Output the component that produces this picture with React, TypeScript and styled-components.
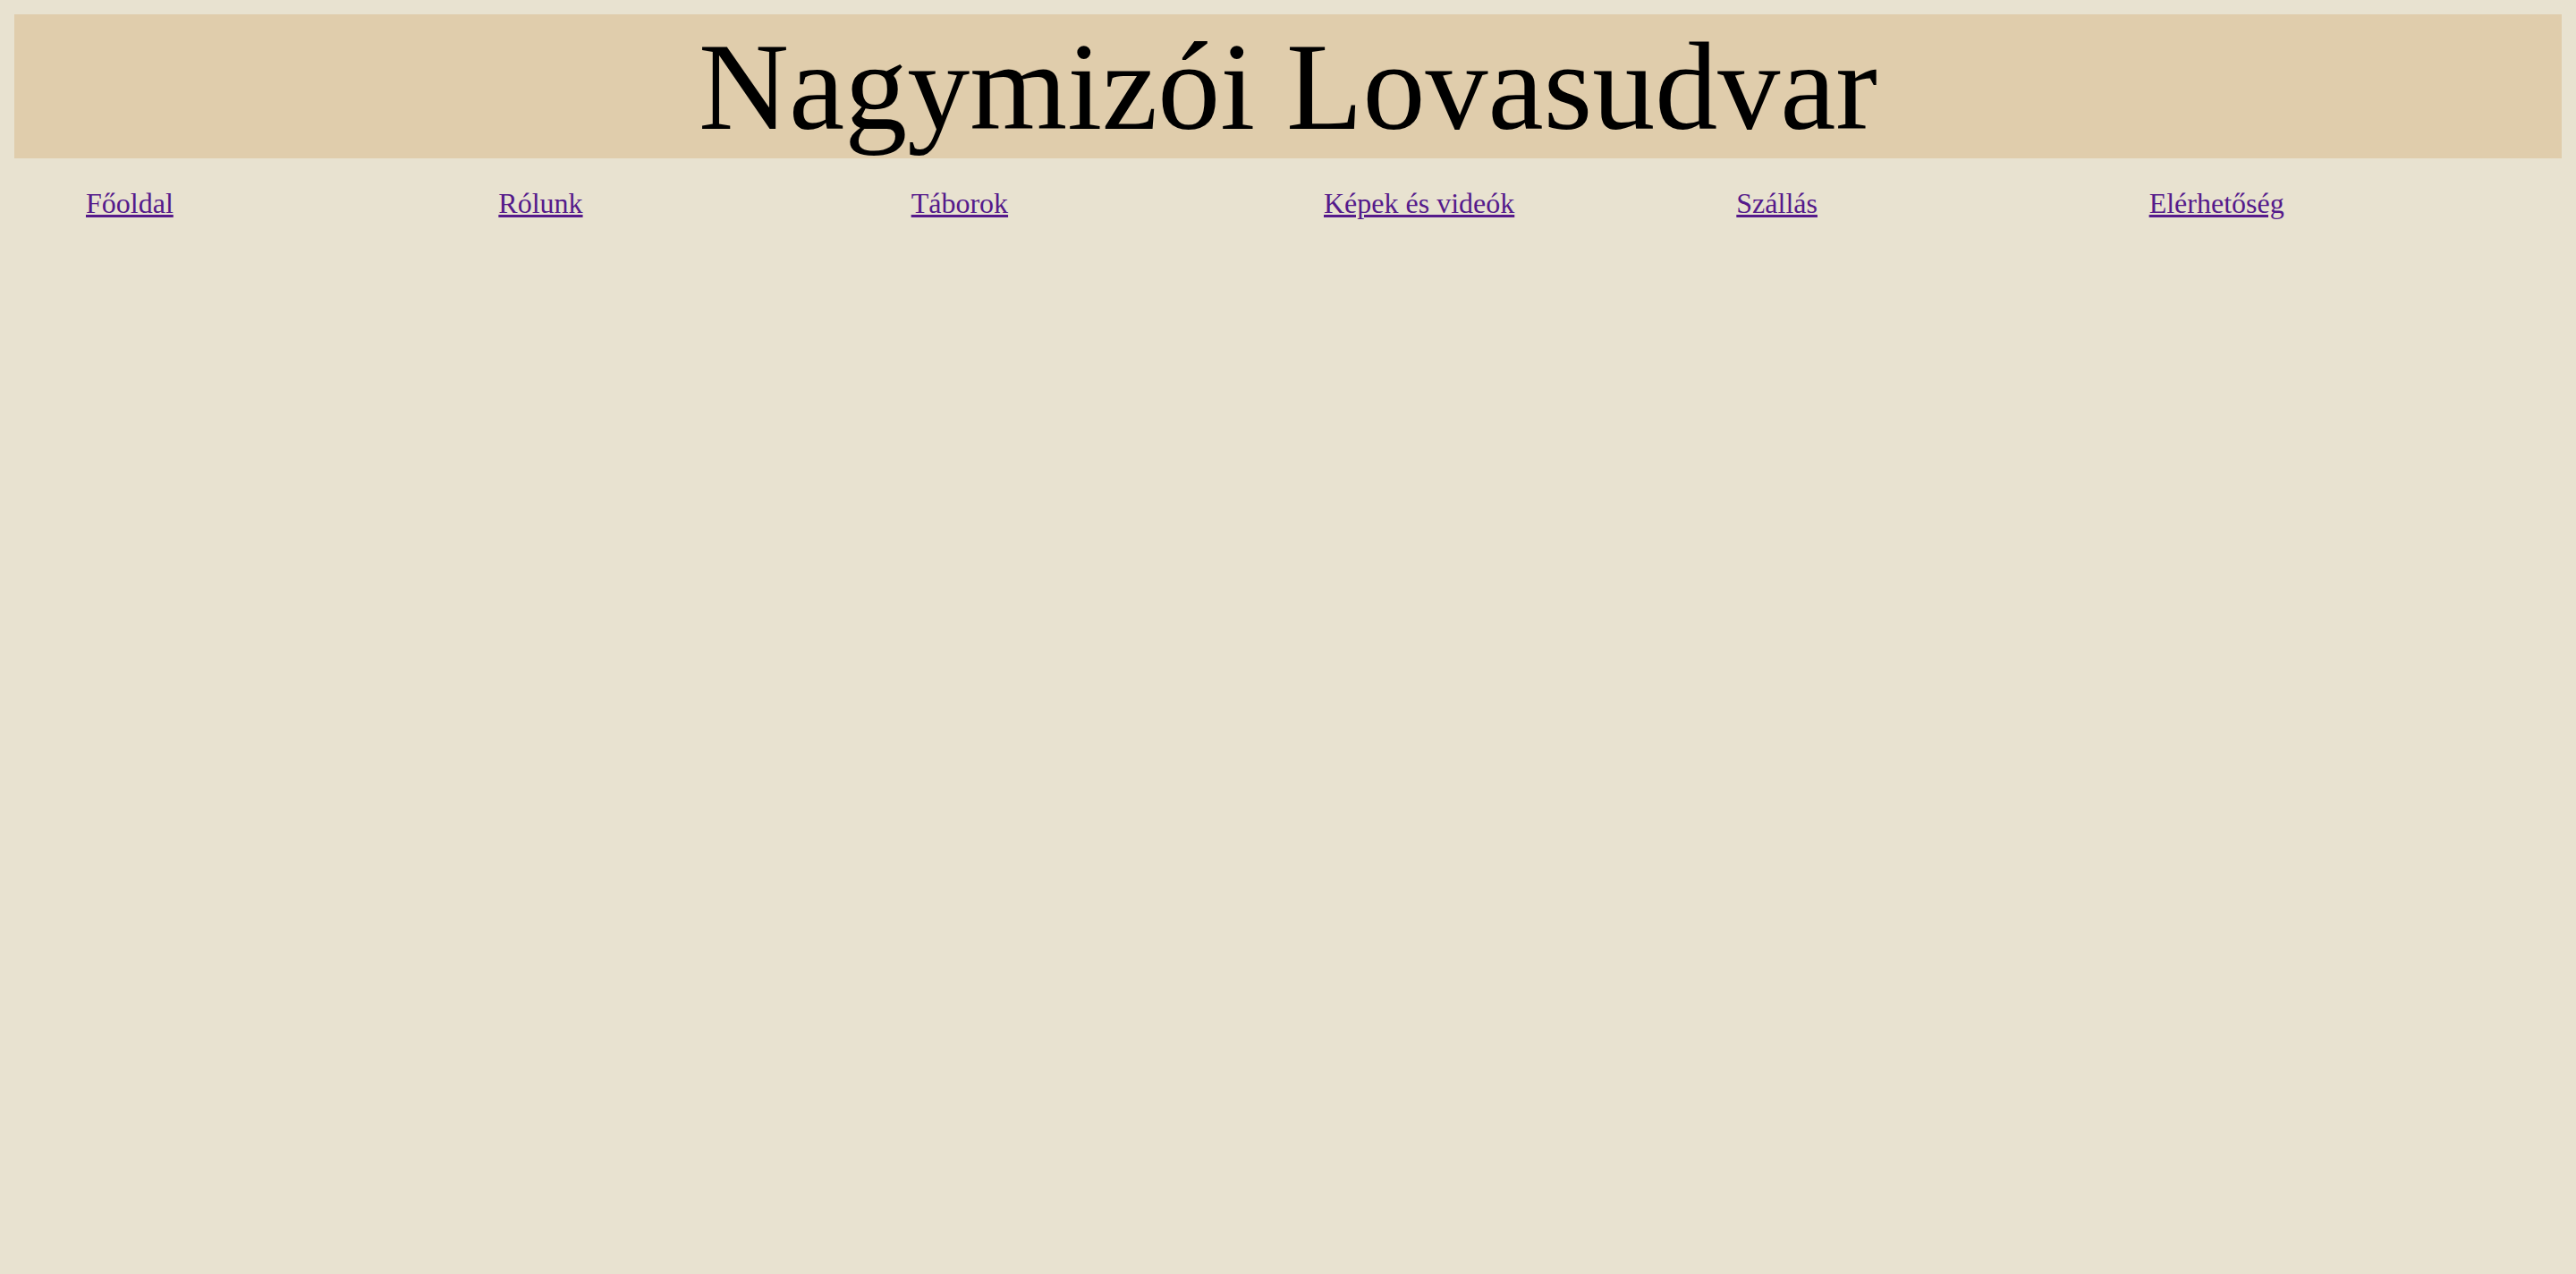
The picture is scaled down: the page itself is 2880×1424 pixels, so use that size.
import styled, { createGlobalStyle } from "styled-components";

const GlobalStyle = createGlobalStyle`
  html, body {
    background-color: #e8e2d0;
  }
  body {
    margin: 16px;
    font-family: "Liberation Serif", "Times New Roman", serif;
  }
`;

const Header = styled.header`
  background-color: #e0cdac;
`;

const Title = styled.h1`
  margin: 0;
  font-size: 140px;
  font-weight: normal;
  line-height: normal;
  text-align: center;
  color: #000;
`;

const NavList = styled.ul`
  display: flex;
  margin: 32px 0;
  padding: 0 0 0 80px;
  list-style: none;
`;

const NavItem = styled.li`
  flex: 1;
  font-size: 32px;
  line-height: normal;
`;

const NavLink = styled.a`
  color: #551a8b;
  text-decoration: underline;
`;

const links = [
  "Főoldal",
  "Rólunk",
  "Táborok",
  "Képek és videók",
  "Szállás",
  "Elérhetőség",
];

function App() {
  return (
    <>
      <GlobalStyle />
      <Header>
        <Title>Nagymizói Lovasudvar</Title>
      </Header>
      <nav>
        <NavList>
          {links.map((label) => (
            <NavItem key={label}>
              <NavLink href="#">{label}</NavLink>
            </NavItem>
          ))}
        </NavList>
      </nav>
    </>
  );
}

export default App;
